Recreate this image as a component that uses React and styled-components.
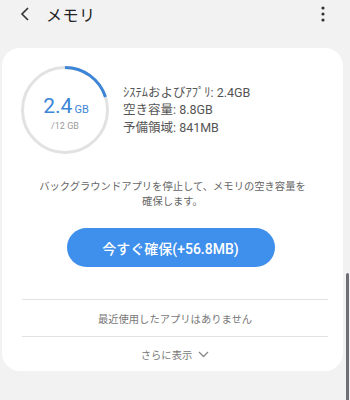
import React from "react";
import styled, { createGlobalStyle } from "styled-components";

const Global = createGlobalStyle`
  html, body { margin: 0; padding: 0; background: #f2f2f2; }
  body { font-family: Roboto, "Noto Sans CJK JP", sans-serif; width: 350px; height: 400px; overflow: hidden; }
`;

const Page = styled.div`
  position: relative;
  width: 350px;
  height: 400px;
  background: #f2f2f2;
`;

const Header = styled.div`
  display: flex;
  align-items: center;
  height: 28px;
  padding: 0 24px 0 20px;
  margin-bottom: 20px;
`;

const IconButton = styled.div`
  display: flex;
  align-items: center;
  justify-content: center;
  width: ${p => p.$w || 14}px;
  height: 20px;
`;

const Title = styled.div`
  flex: 1;
  margin-left: 16px;
  font-size: 16px;
  color: #222;
  letter-spacing: 0.5px;
`;

const Card = styled.div`
  margin-left: 2px;
  width: 341px;
  background: #fff;
  border-radius: 18px;
  padding-top: 18px;
  display: flex;
  flex-direction: column;
  align-items: stretch;
`;

const Summary = styled.div`
  display: flex;
  align-items: center;
  padding-left: 19px;
`;

const Gauge = styled.div`
  position: relative;
  width: 88px;
  height: 88px;
  display: flex;
  flex-direction: column;
  align-items: center;
  justify-content: center;
`;

const GaugeSvg = styled.svg`
  position: absolute;
  inset: 0;
`;

const BigValue = styled.div`
  display: flex;
  align-items: baseline;
  color: #3d85d6;
  margin-top: 6px;
  margin-left: 2px;
`;

const Num = styled.span`
  font-size: 21px;
  line-height: 22px;
`;

const Unit = styled.span`
  font-size: 11px;
  margin-left: 2px;
`;

const Total = styled.div`
  font-size: 9px;
  color: #9a9a9a;
  margin-top: 4px;
`;

const Stats = styled.div`
  margin-left: 14px;
  display: flex;
  flex-direction: column;
`;

const Stat = styled.div`
  font-size: 12.5px;
  line-height: 17.5px;
  color: #555;
`;

const Description = styled.div`
  margin-top: 25px;
  text-align: center;
  font-size: 10.3px;
  line-height: 15px;
  color: #666;
`;

const PrimaryButton = styled.button`
  align-self: center;
  margin: 19px 0 0 -4px;
  width: 208px;
  height: 39px;
  border: none;
  border-radius: 20px;
  background: #3f8fec;
  color: #fff;
  font-family: Roboto, "Noto Sans CJK JP", sans-serif;
  font-size: 14px;
  font-weight: 500;
`;

const Divider = styled.div`
  height: 1px;
  background: #e2e2e2;
  margin: ${p => p.$top || 0}px 15px 0 20px;
`;

const Row = styled.div`
  display: flex;
  align-items: center;
  justify-content: center;
  gap: 6px;
  height: ${p => p.$h}px;
  font-size: 10.3px;
  color: #777;
  margin-left: 5px;
`;

const Scrollbar = styled.div`
  position: absolute;
  right: 1px;
  top: 273px;
  width: 3px;
  height: 130px;
  border-radius: 2px;
  background: #6e6e76;
`;

export default function App() {
  const r = 42.5;
  const c = 2 * Math.PI * r;
  const frac = 2.4 / 12;
  return (
    <Page>
      <Global />
      <Header>
        <IconButton $w={10}>
          <svg width="10" height="14" viewBox="0 0 10 14">
            <path d="M8 1 L2 7 L8 13" fill="none" stroke="#333" strokeWidth="1.6" />
          </svg>
        </IconButton>
        <Title>メモリ</Title>
        <IconButton $w={6}>
          <svg width="4" height="16" viewBox="0 0 4 16">
            <circle cx="2" cy="2" r="1.6" fill="#333" />
            <circle cx="2" cy="8" r="1.6" fill="#333" />
            <circle cx="2" cy="14" r="1.6" fill="#333" />
          </svg>
        </IconButton>
      </Header>
      <Card>
        <Summary>
          <Gauge>
            <GaugeSvg width="88" height="88" viewBox="0 0 88 88">
              <circle cx="44" cy="44" r={r} fill="none" stroke="#e2e2e2" strokeWidth="3" />
              <circle
                cx="44"
                cy="44"
                r={r}
                fill="none"
                stroke="#3d85d6"
                strokeWidth="3"
                strokeDasharray={`${c * frac} ${c}`}
                transform="rotate(-90 44 44)"
              />
            </GaugeSvg>
            <BigValue>
              <Num>2.4</Num>
              <Unit>GB</Unit>
            </BigValue>
            <Total>/12 GB</Total>
          </Gauge>
          <Stats>
            <Stat>ｼｽﾃﾑおよびｱﾌﾟﾘ: 2.4GB</Stat>
            <Stat>空き容量: 8.8GB</Stat>
            <Stat>予備領域: 841MB</Stat>
          </Stats>
        </Summary>
        <Description>
          バックグラウンドアプリを停止して、メモリの空き容量を
          <br />
          確保します。
        </Description>
        <PrimaryButton>今すぐ確保(+56.8MB)</PrimaryButton>
        <Divider $top={32} />
        <Row $h={36}>最近使用したアプリはありません</Row>
        <Divider />
        <Row $h={34}>
          さらに表示
          <svg width="11" height="7" viewBox="0 0 11 7">
            <path d="M1 1 L5.5 5.5 L10 1" fill="none" stroke="#888" strokeWidth="1.3" />
          </svg>
        </Row>
      </Card>
      <Scrollbar />
    </Page>
  );
}
